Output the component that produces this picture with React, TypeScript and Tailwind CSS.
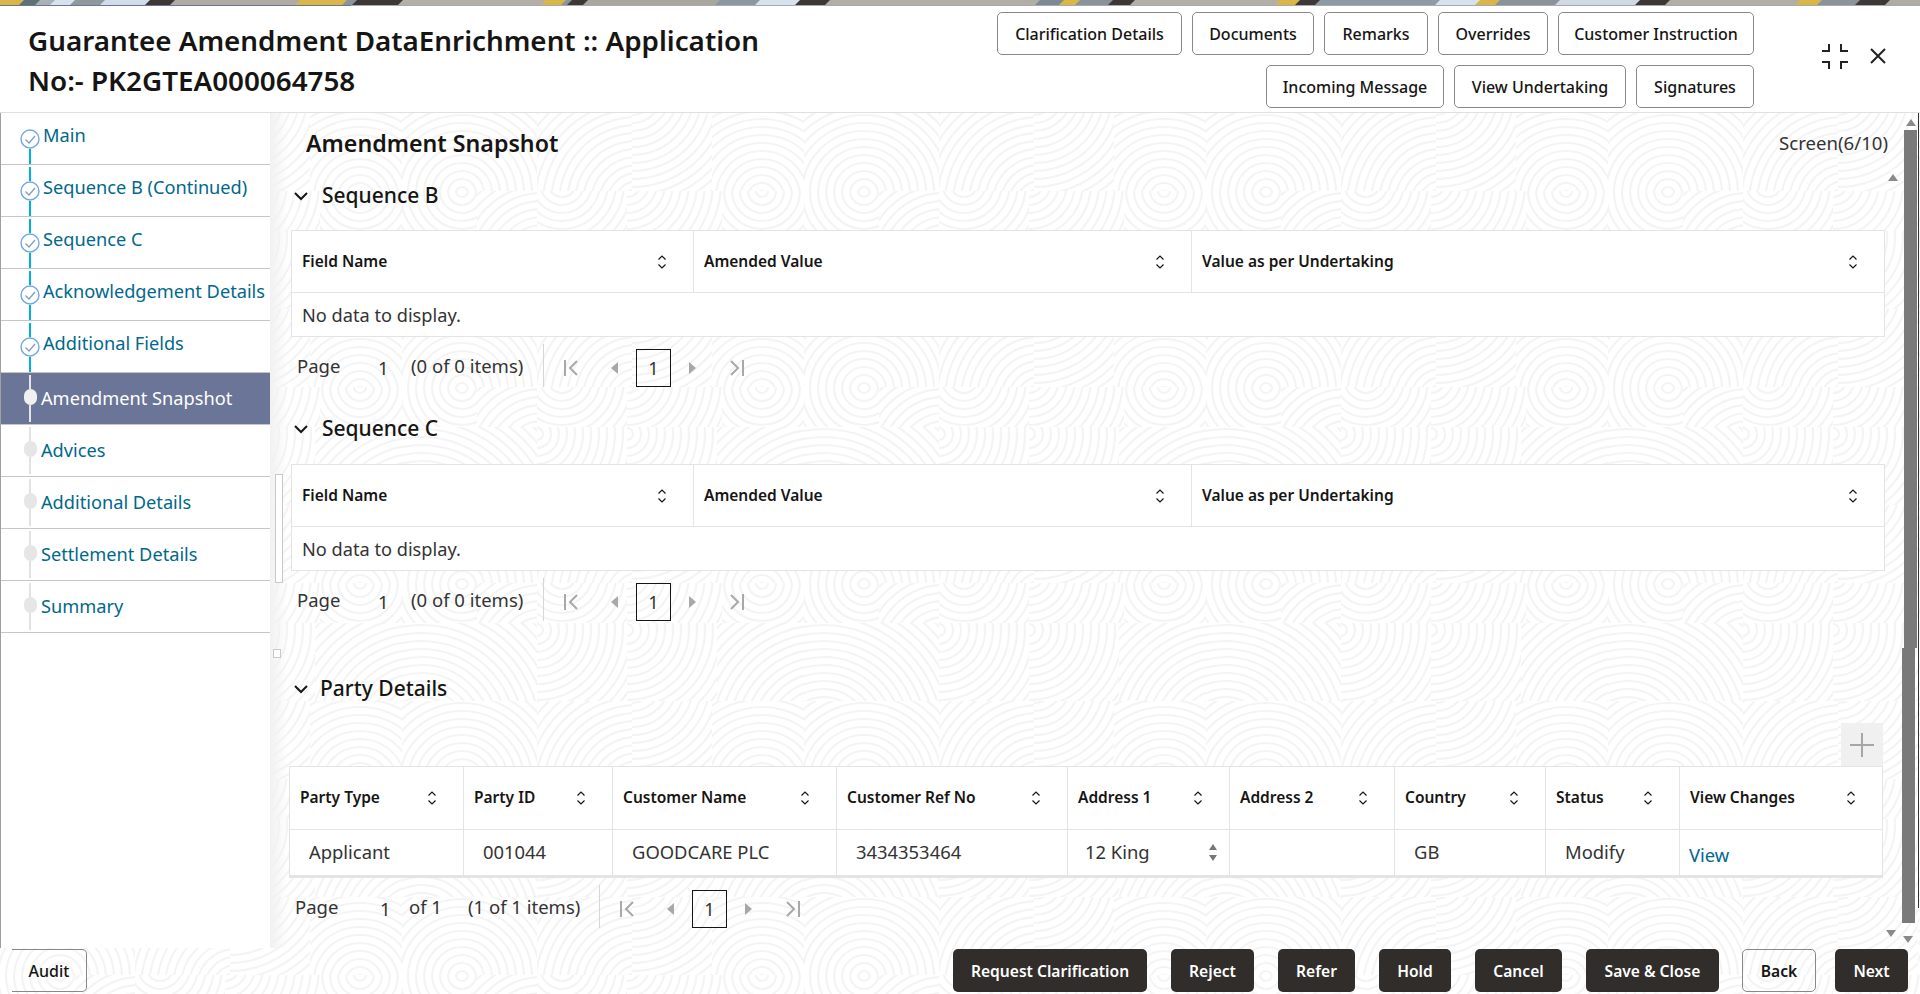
import type { ReactNode } from "react";

const font = { fontFamily: '"Noto Sans", "Open Sans", sans-serif' };

const stripes = [
  [0, 24, "#d8b648"], [24, 40, "#5f7078"], [40, 55, "#a8b0b8"], [55, 75, "#d8e2ee"], [75, 105, "#90989e"],
  [105, 150, "#d0dcea"], [150, 175, "#3d3835"], [175, 300, "#b0aca4"], [300, 347, "#d8b648"], [347, 357, "#8b9299"],
  [357, 403, "#3d3835"], [403, 546, "#b4b0a8"], [546, 566, "#d8b648"], [566, 572, "#8b9299"], [572, 588, "#3d3835"],
  [588, 720, "#a9a69e"], [720, 760, "#8b98a4"], [760, 800, "#d8e2ee"], [800, 830, "#3d3835"], [830, 1040, "#b2aea6"],
  [1040, 1064, "#7c8a94"], [1064, 1080, "#d8b648"], [1080, 1113, "#8a939a"], [1113, 1135, "#3d3835"], [1135, 1280, "#b4b0a8"],
  [1280, 1300, "#d8b648"], [1300, 1320, "#3d3835"], [1320, 1440, "#8e9aa6"], [1440, 1480, "#d8e2ee"], [1480, 1500, "#d8b648"],
  [1500, 1560, "#8a939a"], [1560, 1640, "#cfd9e4"], [1640, 1670, "#3d3835"], [1670, 1800, "#b2aea6"], [1800, 1822, "#d8b648"],
  [1822, 1860, "#8a939a"], [1860, 1890, "#3d3835"], [1890, 1920, "#b0aca4"],
] as const;

const steps = [
  { label: "Main", state: "done", first: true },
  { label: "Sequence B (Continued)", state: "done" },
  { label: "Sequence C", state: "done" },
  { label: "Acknowledgement Details", state: "done" },
  { label: "Additional Fields", state: "done" },
  { label: "Amendment Snapshot", state: "active" },
  { label: "Advices", state: "todo" },
  { label: "Additional Details", state: "todo" },
  { label: "Settlement Details", state: "todo" },
  { label: "Summary", state: "todo" },
];

const partyCols = [
  ["Party Type", "w-[174px]"],
  ["Party ID", "w-[149px]"],
  ["Customer Name", "w-[224px]"],
  ["Customer Ref No", "w-[231px]"],
  ["Address 1", "w-[162px]"],
  ["Address 2", "w-[165px]"],
  ["Country", "w-[151px]"],
  ["Status", "w-[134px]"],
  ["View Changes", "flex-1"],
];

const partyRow = [
  ["Applicant", "w-[174px]"],
  ["001044", "w-[149px]"],
  ["GOODCARE PLC", "w-[224px]"],
  ["3434353464", "w-[231px]"],
];

// cells of the background tile: clip box plus the centre of its rings
const printCells = [
  { x: 0, y: 0, w: 135, h: 78, cx: 60, cy: 80 },
  { x: 135, y: 0, w: 95, h: 78, cx: 235, cy: 90 },
  { x: 230, y: 0, w: 80, h: 78, cx: 230, cy: -20 },
  { x: 310, y: 0, w: 92, h: 78, cx: 360, cy: 84 },
  { x: 0, y: 78, w: 75, h: 40, cx: 60, cy: 78 },
  { x: 75, y: 78, w: 60, h: 40, cx: 140, cy: 150 },
  { x: 135, y: 78, w: 90, h: 40, cx: 160, cy: 70 },
  { x: 225, y: 78, w: 95, h: 40, cx: 225, cy: 70 },
  { x: 320, y: 78, w: 82, h: 40, cx: 360, cy: 78 },
  { x: 0, y: 118, w: 135, h: 78, cx: 20, cy: 230 },
  { x: 135, y: 118, w: 90, h: 78, cx: 135, cy: 125 },
  { x: 225, y: 118, w: 90, h: 78, cx: 225, cy: 125 },
  { x: 315, y: 118, w: 87, h: 78, cx: 420, cy: 230 },
];

const ringRadii = Array.from({ length: 22 }, (_, i) => 6 + i * 8);

function SortIcon() {
  return (
    <svg width="10" height="16" viewBox="0 0 10 16" fill="none" stroke="#161513" strokeWidth="1.2" className="shrink-0">
      <path d="M1.5 5.5 5 2l3.5 3.5M1.5 10.5 5 14l3.5-3.5" />
    </svg>
  );
}

function Chevron() {
  return (
    <svg width="14" height="9" viewBox="0 0 14 9" fill="none" stroke="#161513" strokeWidth="2" className="shrink-0">
      <path d="M1 1l6 6 6-6" />
    </svg>
  );
}

function HeadCell({ label, className }: { label: string; className: string }) {
  return (
    <div className={`flex h-full items-center justify-between border-r border-[#e4e4e4] pl-[10px] pr-[26px] text-[15.5px] font-semibold text-[#161513] last:border-r-0 ${className}`}>
      <span>{label}</span>
      <SortIcon />
    </div>
  );
}

function EmptyTable() {
  return (
    <div className="ml-[21px] h-[107px] w-[1594px] border border-[#e4e4e4] bg-white">
      <div className="flex h-[62px] border-b border-[#e4e4e4]">
        <HeadCell label="Field Name" className="w-[402px]" />
        <HeadCell label="Amended Value" className="w-[498px]" />
        <HeadCell label="Value as per Undertaking" className="flex-1" />
      </div>
      <div className="flex h-[43px] items-center pl-[10px] pt-[2px] text-[18.2px] leading-none text-[#333]">No data to display.</div>
    </div>
  );
}

function PagerNav() {
  return (
    <div className="flex h-[43px] items-start border-l border-[#d6d6d6]">
      <div className="mt-[5px] flex h-[38px] items-center">
        <svg width="14" height="16" viewBox="0 0 14 16" fill="none" stroke="#a8a8a8" strokeWidth="2" className="ml-[20px]">
          <path d="M1 0v16M13 1 6 8l7 7" />
        </svg>
        <svg width="7" height="12" viewBox="0 0 7 12" fill="#a8a8a8" className="ml-[33px]">
          <path d="M7 0v12L0 6z" />
        </svg>
        <div className="ml-[18px] flex h-[38px] w-[35px] items-center justify-center border border-[#161513] text-[18px] text-[#333]">1</div>
        <svg width="7" height="12" viewBox="0 0 7 12" fill="#a8a8a8" className="ml-[18px]">
          <path d="M0 0v12l7-6z" />
        </svg>
        <svg width="14" height="16" viewBox="0 0 14 16" fill="none" stroke="#a8a8a8" strokeWidth="2" className="ml-[34px]">
          <path d="M13 0v16M1 1l7 7-7 7" />
        </svg>
      </div>
    </div>
  );
}

function EmptyPager() {
  return (
    <div className="ml-[27px] mt-[7px] flex h-[43px] items-center text-[18.5px] text-[#333]">
      <span className="w-[81px] pt-[1px]">Page</span>
      <span className="w-[33px] pt-[4px]">1</span>
      <span className="w-[132px] pt-[1px]">(0 of 0 items)</span>
      <PagerNav />
    </div>
  );
}

function SectionHeader({ title, className, gap }: { title: string; className: string; gap: string }) {
  return (
    <div className={`flex h-[46px] items-center text-[21px] font-medium text-[#161513] ${className}`}>
      <Chevron />
      <span className={gap}>{title}</span>
    </div>
  );
}

function Step({ label, state, first }: { label: string; state: string; first?: boolean }) {
  const active = state === "active";
  const done = state === "done";
  const line = done ? "bg-[#00b0e0]" : active ? "bg-[#e5e5e5]" : "bg-[#e2e2e2]";
  return (
    <div className={`flex h-[52px] border-b border-[#c8c6c1] ${active ? "bg-[#6b7598]" : ""}`}>
      <div className="ml-[19px] flex w-[20px] shrink-0 flex-col items-center">
        {done ? (
          <>
            <div className={`mt-[2px] h-[14px] w-[2px] ${first ? "" : line}`} />
            <svg width="20" height="20" viewBox="0 0 20 20" fill="none" className="shrink-0">
              <circle cx="10" cy="10" r="9" fill="#fff" stroke="#6fa8e6" strokeWidth="1.4" />
              <path d="M5.5 10.5 9 14l6-7" stroke="#7f9ec4" strokeWidth="1.3" />
            </svg>
            <div className={`h-[15px] w-[2px] ${line}`} />
          </>
        ) : (
          <>
            <div className={`mt-[2px] h-[14px] w-[2px] ${line}`} />
            <div className={`h-[16px] w-[13px] shrink-0 rounded-full ${active ? "bg-[#f0f0f0]" : "bg-[#e6e6e6]"}`} />
            <div className={`h-[17px] w-[2px] ${line}`} />
          </>
        )}
      </div>
      {done ? (
        <span className="ml-[3px] pt-[9px] text-[18.2px] leading-[26px] whitespace-nowrap text-[#00688c]">{label}</span>
      ) : (
        <span className={`ml-[1px] self-center pb-[1px] text-[18.2px] leading-[26px] whitespace-nowrap ${active ? "text-white" : "text-[#00688c]"}`}>{label}</span>
      )}
    </div>
  );
}

function TopButton({ children, className }: { children: ReactNode; className: string }) {
  return (
    <button className={`flex h-[43px] items-center justify-center rounded-[5px] border border-[#8a8886] bg-white text-[16px] font-medium text-[#161513] ${className}`}>
      {children}
    </button>
  );
}

function DarkButton({ children, className }: { children: ReactNode; className: string }) {
  return (
    <button className={`flex h-[43px] items-center justify-center rounded-[5px] bg-[#312d2a] pt-[2px] text-[15.6px] font-semibold text-white ${className}`}>
      {children}
    </button>
  );
}

function Arrow({ className, down }: { className: string; down?: boolean }) {
  return (
    <svg width="10" height="7" viewBox="0 0 10 7" fill="#8a8a8a" className={`absolute ${className}`}>
      <path d={down ? "M0 0h10L5 7z" : "M0 7h10L5 0z"} />
    </svg>
  );
}

function Fingerprint() {
  return (
    <svg className="absolute inset-0 h-full w-full" aria-hidden="true">
      <defs>
        {printCells.map((c, i) => (
          <clipPath key={i} id={`cell-${i}`}>
            <rect x={c.x} y={c.y} width={c.w} height={c.h} />
          </clipPath>
        ))}
        <pattern id="prints" width="402" height="196" patternUnits="userSpaceOnUse" patternTransform="translate(0 113)">
          <g fill="none" stroke="#f4f4f4" strokeWidth="2.2">
            {printCells.map((c, i) => (
              <g key={i} clipPath={`url(#cell-${i})`}>
                {ringRadii.map((r) => (
                  <circle key={r} cx={c.cx} cy={c.cy} r={r} />
                ))}
              </g>
            ))}
          </g>
        </pattern>
      </defs>
      <rect width="100%" height="100%" fill="url(#prints)" />
    </svg>
  );
}

export default function App() {
  return (
    <div style={font} className="relative flex h-[994px] w-[1920px] flex-col overflow-hidden bg-white">
      <Fingerprint />
      <svg width="1920" height="6" viewBox="0 0 1920 6" className="relative block shrink-0">
        {stripes.map(([a, b, c]) => (
          <polygon key={a} points={`${a},0 ${b + 6},0 ${b},6 ${a - 6},6`} fill={c} />
        ))}
        <rect x="0" y="5" width="351" height="1" fill="#6b7598" />
        <rect x="351" y="5" width="1569" height="1" fill="#a9aaae" />
      </svg>

      <header className="relative flex h-[107px] shrink-0 border-b border-[#e0e0e0] bg-white pt-[6px]">
        <h1 className="ml-[28px] mt-[8px] w-[790px] text-[27.8px] font-semibold leading-[40px] text-[#161513]">
          Guarantee Amendment DataEnrichment :: Application No:- PK2GTEA000064758
        </h1>
        <div className="ml-auto flex flex-col items-end gap-[10px]">
          <div className="flex gap-[10px]">
            <TopButton className="w-[185px]">Clarification Details</TopButton>
            <TopButton className="w-[122px]">Documents</TopButton>
            <TopButton className="w-[104px]">Remarks</TopButton>
            <TopButton className="w-[110px]">Overrides</TopButton>
            <TopButton className="w-[196px]">Customer Instruction</TopButton>
          </div>
          <div className="flex gap-[10px]">
            <TopButton className="w-[178px]">Incoming Message</TopButton>
            <TopButton className="w-[172px]">View Undertaking</TopButton>
            <TopButton className="w-[118px]">Signatures</TopButton>
          </div>
        </div>
        <div className="ml-[68px] mr-[34px] flex items-center gap-[22px] pb-[12px]">
          <svg width="26" height="25" viewBox="0 0 26 25" fill="none" stroke="#222" strokeWidth="2">
            <path d="M7 0v7H0M19 0v7h7M7 25v-7H0M19 25v-7h7" />
          </svg>
          <svg width="16" height="16" viewBox="0 0 16 16" fill="none" stroke="#222" strokeWidth="2">
            <path d="M1 1l14 14M15 1 1 15" />
          </svg>
        </div>
      </header>

      <div className="relative flex min-h-0 flex-1">
        <nav className="w-[270px] shrink-0 border-l border-[#a0a0a0] bg-white">
          {steps.map((s) => (
            <Step key={s.label} label={s.label} state={s.state} first={s.first} />
          ))}
        </nav>

        <main className="relative min-w-0 flex-1">
          <div className="absolute inset-y-0 left-0 w-[18px] bg-gradient-to-r from-[#f1f1f1] to-transparent" />
          <div className="relative">
            <div className="flex h-[60px] items-center justify-between pl-[36px] pr-[32px]">
              <h2 className="text-[23.2px] font-semibold text-[#161513]">Amendment Snapshot</h2>
              <span className="text-[18.6px] text-[#333]">Screen(6/10)</span>
            </div>

            <SectionHeader title="Sequence B" className="mb-[11px] ml-[24px]" gap="ml-[14px]" />
            <EmptyTable />
            <EmptyPager />

            <SectionHeader title="Sequence C" className="mb-[12px] ml-[24px] mt-[19px]" gap="ml-[14px]" />
            <EmptyTable />
            <EmptyPager />

            <SectionHeader title="Party Details" className="ml-[24px] mt-[45px]" gap="ml-[12px]" />
            <div className="mr-[37px] mt-[11px] flex justify-end">
              <div className="flex h-[43px] w-[42px] items-center justify-center bg-[#f0f0f0]">
                <svg width="24" height="24" viewBox="0 0 24 24" fill="none" stroke="#a6a6a6" strokeWidth="2">
                  <path d="M12 0v24M0 12h24" />
                </svg>
              </div>
            </div>

            <div className="ml-[19px] h-[112px] w-[1594px] border border-b-[3px] border-[#e4e4e4] bg-white">
              <div className="flex h-[63px] border-b border-[#e4e4e4]">
                {partyCols.map(([label, w]) => (
                  <HeadCell key={label} label={label} className={w} />
                ))}
              </div>
              <div className="flex h-[45px] text-[18.4px] text-[#333]">
                {partyRow.map(([text, w]) => (
                  <div key={text} className={`flex items-center border-r border-[#e4e4e4] pb-[1px] pl-[19px] ${w}`}>
                    {text}
                  </div>
                ))}
                <div className="flex w-[162px] items-center justify-between border-r border-[#e4e4e4] pb-[1px] pl-[17px] pr-[12px]">
                  <span>12 King</span>
                  <span className="flex flex-col gap-[5px]">
                    <svg width="8" height="6" viewBox="0 0 8 6" fill="#777"><path d="M0 6h8L4 0z" /></svg>
                    <svg width="8" height="6" viewBox="0 0 8 6" fill="#777"><path d="M0 0h8L4 6z" /></svg>
                  </span>
                </div>
                <div className="w-[165px] border-r border-[#e4e4e4]" />
                <div className="flex w-[151px] items-center border-r border-[#e4e4e4] pb-[1px] pl-[19px]">GB</div>
                <div className="flex w-[134px] items-center border-r border-[#e4e4e4] pb-[1px] pl-[19px]">Modify</div>
                <div className="flex flex-1 items-center pl-[9px] pt-[5px] text-[#00688c]">View</div>
              </div>
            </div>

            <div className="ml-[25px] mt-[7px] flex h-[43px] items-center text-[18.5px] text-[#333]">
              <span className="w-[85px]">Page</span>
              <span className="w-[29px] pt-[4px]">1</span>
              <span className="w-[59px]">of 1</span>
              <span className="w-[131px]">(1 of 1 items)</span>
              <PagerNav />
            </div>
          </div>
        </main>

        <div className="absolute left-[1904px] top-[17px] h-[518px] w-[13px] bg-[#7a7a7a]" />
        <div className="absolute left-[1902px] top-[535px] h-[275px] w-[13px] bg-[#7a7a7a]" />
        <div className="absolute bottom-[40px] left-[1918px] top-0 w-[1px] bg-[#333]" />
        <Arrow className="left-[1906px] top-[6px]" />
        <Arrow className="left-[1888px] top-[61px]" />
        <Arrow className="left-[1886px] top-[817px]" down />
        <Arrow className="left-[1903px] top-[823px]" down />
        <div className="absolute left-[275px] top-[361px] h-[109px] w-[8px] border border-[#c8c8c8] bg-white" />
        <div className="absolute left-[273px] top-[536px] h-[9px] w-[8px] border border-[#c8c8c8] bg-white" />
      </div>

      <footer className="relative flex h-[46px] shrink-0 items-start pl-[12px] pt-[1px]">
        <button className="flex h-[43px] w-[75px] items-center justify-center rounded-r-[5px] border border-l-0 border-[#8a8886] pt-[1px] text-[16px] font-medium text-[#161513]">
          Audit
        </button>
        <div className="ml-auto mr-[12px] flex gap-[24px]">
          <DarkButton className="w-[194px]">Request Clarification</DarkButton>
          <DarkButton className="w-[83px]">Reject</DarkButton>
          <DarkButton className="w-[77px]">Refer</DarkButton>
          <DarkButton className="w-[72px]">Hold</DarkButton>
          <DarkButton className="w-[87px]">Cancel</DarkButton>
          <DarkButton className="w-[133px]">Save &amp; Close</DarkButton>
          <button className="-ml-[1px] flex h-[43px] w-[74px] items-center justify-center rounded-[5px] border border-[#8a8886] pt-[2px] text-[15.6px] font-semibold text-[#161513]">
            Back
          </button>
          <DarkButton className="-ml-[5px] w-[73px]">Next</DarkButton>
        </div>
      </footer>
    </div>
  );
}
